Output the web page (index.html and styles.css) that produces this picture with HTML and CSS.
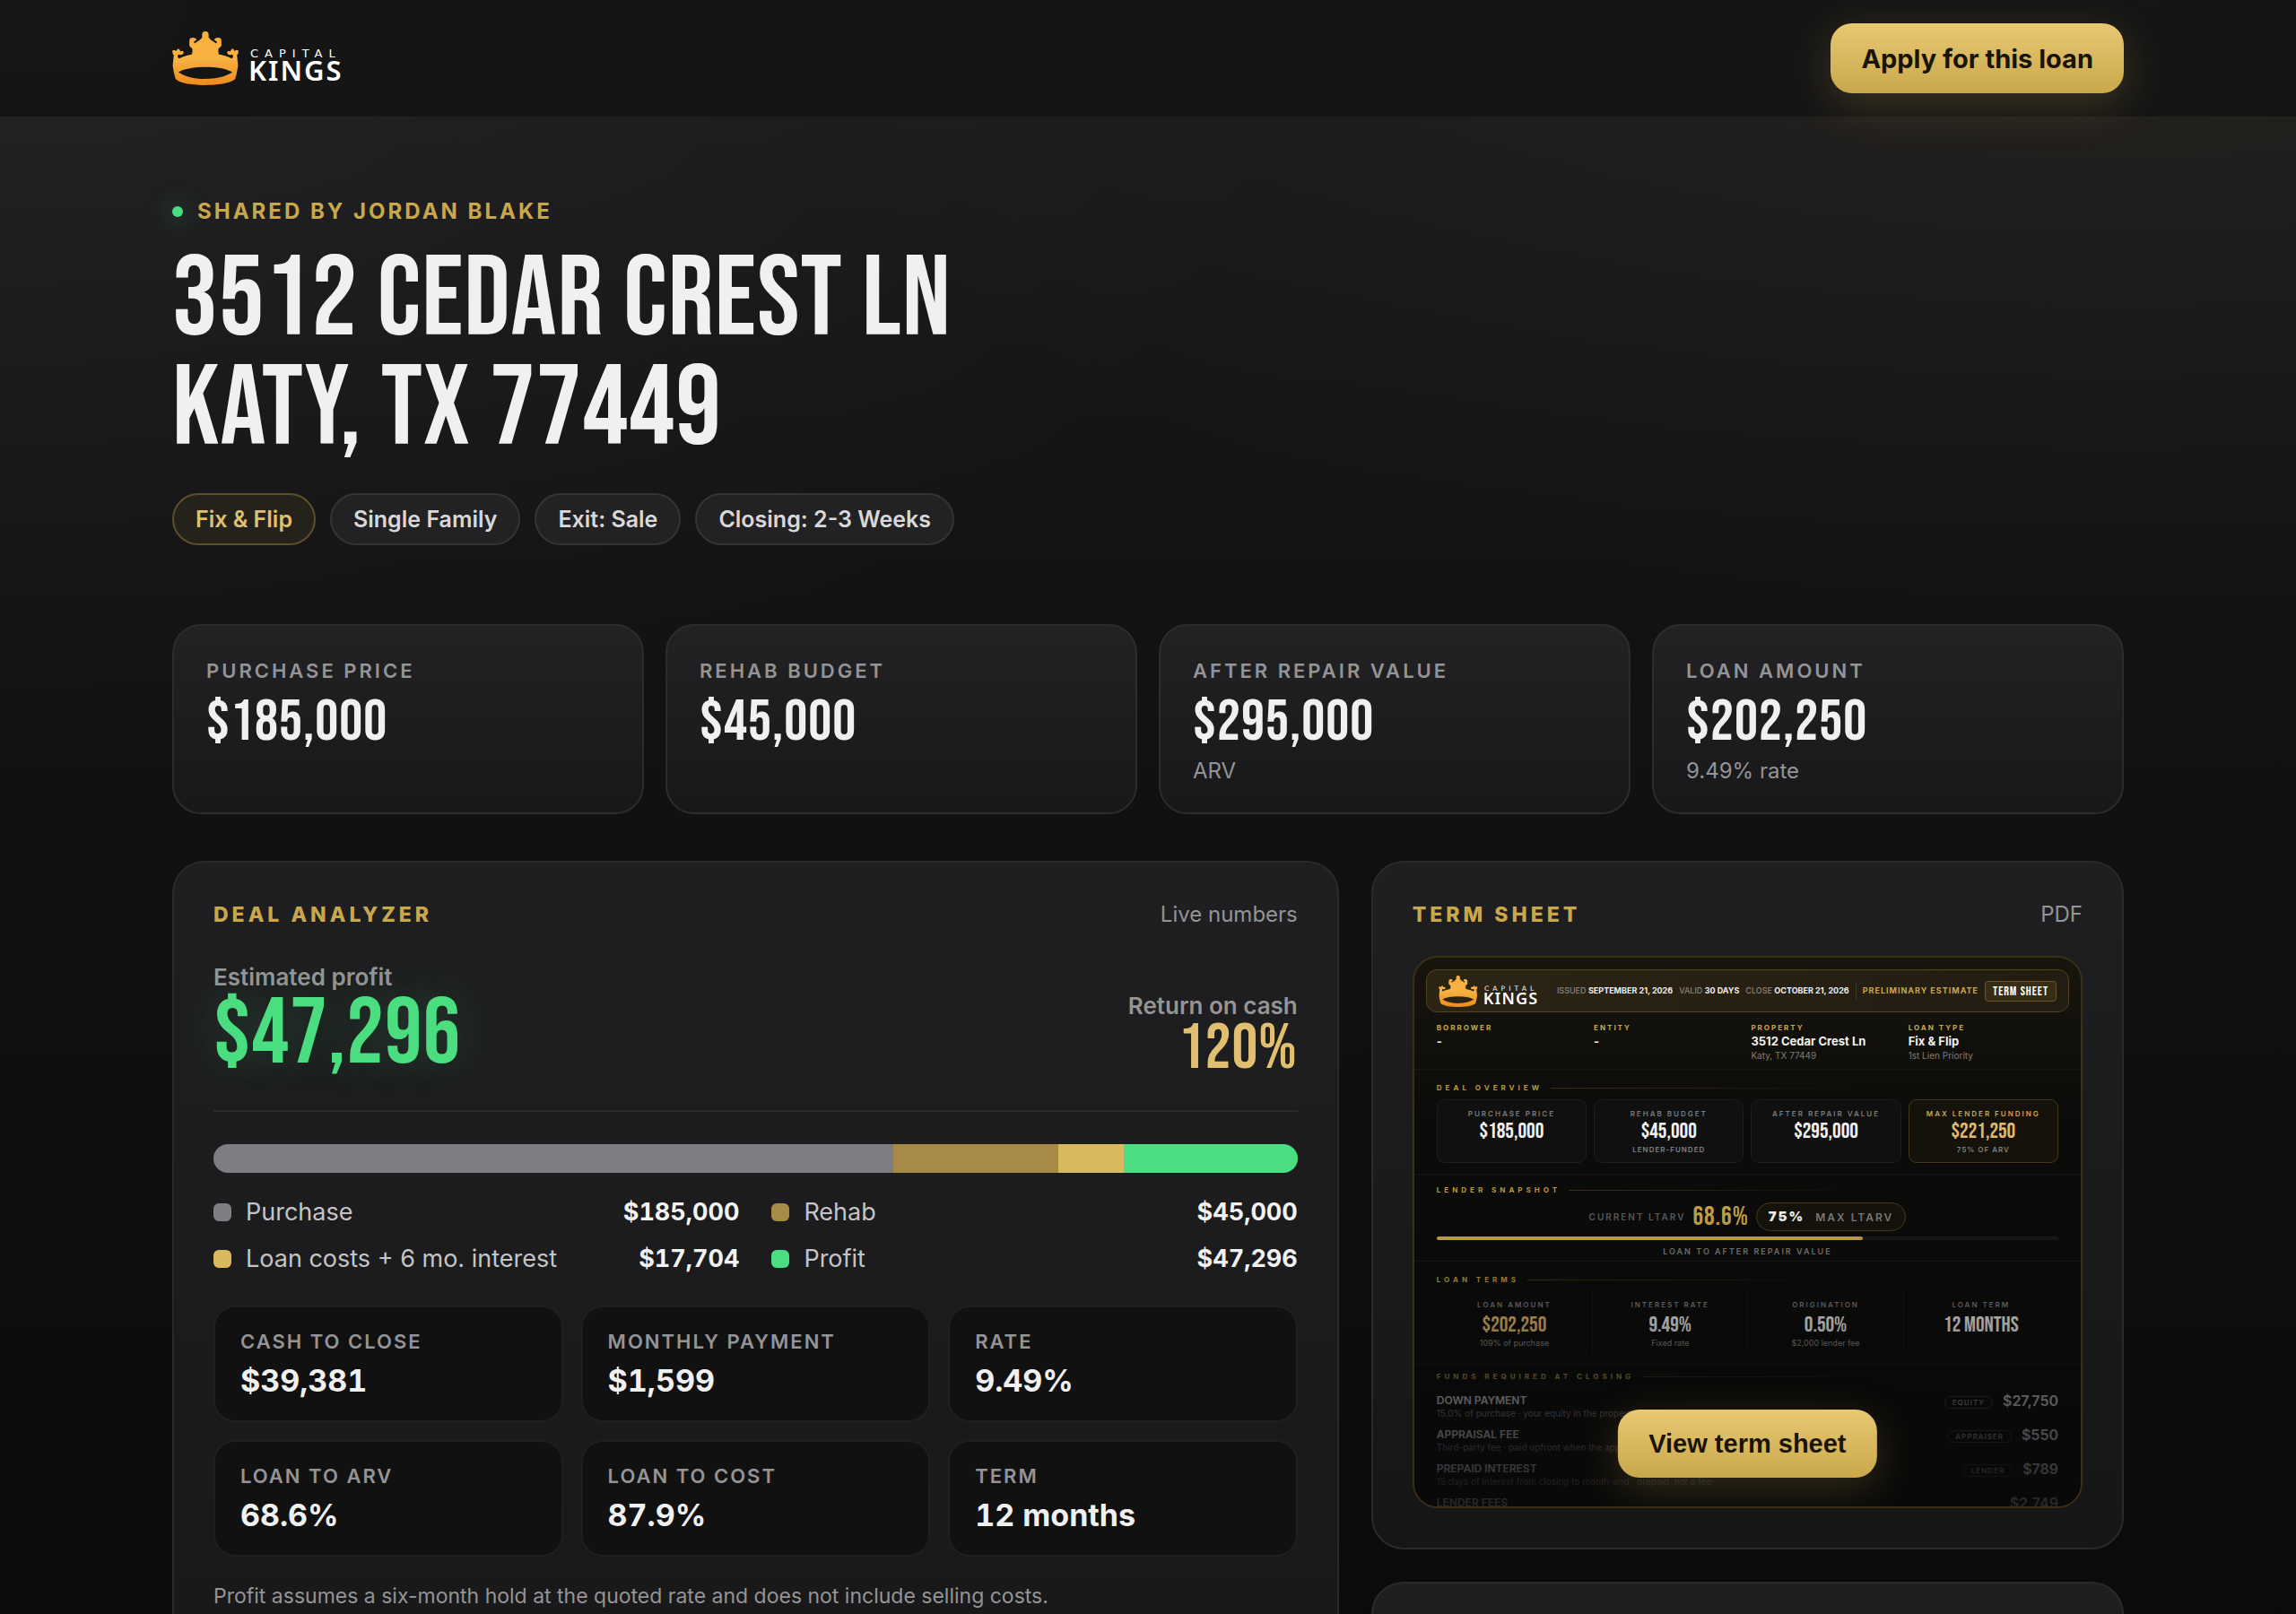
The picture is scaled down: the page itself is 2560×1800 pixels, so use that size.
FILE: index.html
```html
<!DOCTYPE html>
<html lang="en">
<head>
    <meta charset="utf-8">
    <title>3512 Cedar Crest Ln - Capital Kings</title>
    <link rel="stylesheet" href="styles.css">
</head>
<body>
    <svg class="sprite" aria-hidden="true">
        <defs>
            <linearGradient id="crownGold" x1="0" y1="0" x2="0" y2="60" gradientUnits="userSpaceOnUse">
                <stop offset="0" stop-color="#fbb03b"/>
                <stop offset="0.5" stop-color="#f7b243"/>
                <stop offset="1" stop-color="#ee8a1c"/>
            </linearGradient>
            <path id="crownHalf" d="M36.5 0 H37 C39.5 0 40.7 1.5 40.6 3.5 V6.6 C42 9.5 46 11.2 49 13.4 C50 12.2 50.2 10.8 48.4 10.4 L46.8 9.2 C48.5 6.6 52 6.4 54.2 8 C55.3 10 54.6 13 54.9 15.5 C54.6 17.5 52.4 18 51.5 19.5 C51.4 21.5 51.2 24 52.3 25.8 C57 26.6 62 28 66.3 30.2 C68.4 29 68.4 26.4 66.4 25.8 C64.4 27 61.6 26 61.3 23.8 C61.2 22 63 20.8 64.8 22.6 L66 20 L68 19.2 L69.4 22 L71.4 20.8 L74 21.6 L73.2 25.6 L72.2 26.2 L73.4 38 C72.6 44 71.6 49 70.2 53 C66 58 50 60 36.5 60 V53 C52 53 62 49 67 45.4 C60 41.6 50 39.8 36.5 39.8 Z"/>
            <symbol id="logo" viewBox="0 0 188 60">
                <g fill="url(#crownGold)">
                    <use href="#crownHalf"/>
                    <use href="#crownHalf" transform="translate(74 0) scale(-1 1)"/>
                </g>
                <text class="logo-top" x="87" y="29">CAPITAL</text>
                <text class="logo-main" x="85" y="55">KINGS</text>
            </symbol>
        </defs>
    </svg>

    <header class="topbar">
        <div class="wrap topbar-row">
            <svg class="logo" role="img" aria-label="Capital Kings"><use href="#logo"/></svg>
            <button type="button" class="btn">Apply for this loan</button>
        </div>
    </header>

    <main class="wrap">
        <section class="hero">
            <p class="eyebrow"><span class="dot"></span>Shared by Jordan Blake</p>
            <h1>3512 Cedar Crest Ln<br>Katy, TX 77449</h1>
            <ul class="chips">
                <li class="chip chip-gold">Fix &amp; Flip</li>
                <li class="chip">Single Family</li>
                <li class="chip">Exit: Sale</li>
                <li class="chip">Closing: 2-3 Weeks</li>
            </ul>
        </section>

        <section class="stats">
            <div class="stat">
                <p class="label">Purchase price</p>
                <p class="stat-value">$185,000</p>
            </div>
            <div class="stat">
                <p class="label">Rehab budget</p>
                <p class="stat-value">$45,000</p>
            </div>
            <div class="stat">
                <p class="label">After repair value</p>
                <p class="stat-value">$295,000</p>
                <p class="stat-sub">ARV</p>
            </div>
            <div class="stat">
                <p class="label">Loan amount</p>
                <p class="stat-value">$202,250</p>
                <p class="stat-sub">9.49% rate</p>
            </div>
        </section>

        <div class="columns">
            <section class="panel">
                <div class="panel-head">
                    <h2>Deal analyzer</h2>
                    <span>Live numbers</span>
                </div>

                <div class="profit-row">
                    <div>
                        <p class="profit-label">Estimated profit</p>
                        <p class="profit-value">$47,296</p>
                    </div>
                    <div class="return">
                        <p class="profit-label">Return on cash</p>
                        <p class="return-value">120%</p>
                    </div>
                </div>

                <div class="bar">
                    <span class="c-purchase" style="width: 62.71%"></span>
                    <span class="c-rehab" style="width: 15.25%"></span>
                    <span class="c-costs" style="width: 6%"></span>
                    <span class="c-profit" style="width: 16.04%"></span>
                </div>

                <ul class="legend">
                    <li><i class="swatch c-purchase"></i>Purchase<b>$185,000</b></li>
                    <li><i class="swatch c-rehab"></i>Rehab<b>$45,000</b></li>
                    <li><i class="swatch c-costs"></i>Loan costs + 6 mo. interest<b>$17,704</b></li>
                    <li><i class="swatch c-profit"></i>Profit<b>$47,296</b></li>
                </ul>

                <div class="minis">
                    <div class="mini"><p class="label">Cash to close</p><p class="mini-value">$39,381</p></div>
                    <div class="mini"><p class="label">Monthly payment</p><p class="mini-value">$1,599</p></div>
                    <div class="mini"><p class="label">Rate</p><p class="mini-value">9.49%</p></div>
                    <div class="mini"><p class="label">Loan to ARV</p><p class="mini-value">68.6%</p></div>
                    <div class="mini"><p class="label">Loan to cost</p><p class="mini-value">87.9%</p></div>
                    <div class="mini"><p class="label">Term</p><p class="mini-value">12 months</p></div>
                </div>

                <p class="note">Profit assumes a six-month hold at the quoted rate and does not include selling costs.</p>
            </section>

            <aside class="side">
                <section class="panel">
                    <div class="panel-head">
                        <h2>Term sheet</h2>
                        <span>PDF</span>
                    </div>

                    <div class="sheet">
                        <div class="sheet-top">
                            <svg class="sheet-logo" role="img" aria-label="Capital Kings"><use href="#logo"/></svg>
                            <div class="sheet-meta">
                                <span>Issued <b>September 21, 2026</b></span>
                                <span>Valid <b>30 days</b></span>
                                <span>Close <b>October 21, 2026</b></span>
                                <span class="sheet-prelim">Preliminary estimate</span>
                                <span class="sheet-badge">Term sheet</span>
                            </div>
                        </div>

                        <div class="sheet-block sheet-info">
                            <div><h4>Borrower</h4><p class="info-main">-</p></div>
                            <div><h4>Entity</h4><p class="info-main">-</p></div>
                            <div><h4>Property</h4><p class="info-main">3512 Cedar Crest Ln</p><p class="info-sub">Katy, TX 77449</p></div>
                            <div><h4>Loan type</h4><p class="info-main">Fix &amp; Flip</p><p class="info-sub">1st Lien Priority</p></div>
                        </div>

                        <div class="sheet-block">
                            <h3>Deal overview</h3>
                            <div class="boxes">
                                <div class="box"><p class="tiny">Purchase price</p><p class="box-value">$185,000</p></div>
                                <div class="box"><p class="tiny">Rehab budget</p><p class="box-value">$45,000</p><p class="box-sub">Lender-funded</p></div>
                                <div class="box"><p class="tiny">After repair value</p><p class="box-value">$295,000</p></div>
                                <div class="box box-gold"><p class="tiny">Max lender funding</p><p class="box-value">$221,250</p><p class="box-sub">75% of ARV</p></div>
                            </div>
                        </div>

                        <div class="sheet-block snapshot">
                            <h3>Lender snapshot</h3>
                            <div class="ltarv">
                                <span class="ltarv-label">Current LTARV</span>
                                <span class="ltarv-value">68.6%</span>
                                <span class="ltarv-pill"><b>75%</b>Max LTARV</span>
                            </div>
                            <div class="meter"><span style="width: 68.6%"></span></div>
                            <p class="tiny meter-note">Loan to after repair value</p>
                        </div>

                        <div class="sheet-block terms-block">
                            <h3>Loan terms</h3>
                            <div class="terms">
                                <div><p class="tiny">Loan amount</p><p class="box-value gold">$202,250</p><p class="term-sub">109% of purchase</p></div>
                                <div><p class="tiny">Interest rate</p><p class="box-value">9.49%</p><p class="term-sub">Fixed rate</p></div>
                                <div><p class="tiny">Origination</p><p class="box-value">0.50%</p><p class="term-sub">$2,000 lender fee</p></div>
                                <div><p class="tiny">Loan term</p><p class="box-value">12 months</p></div>
                            </div>
                        </div>

                        <div class="sheet-block funds-block">
                            <h3>Funds required at closing</h3>
                            <table class="funds">
                                <tr><th scope="row">Down payment<small>15.0% of purchase · your equity in the property</small></th><td><span class="tag">Equity</span>$27,750</td></tr>
                                <tr><th scope="row">Appraisal fee<small>Third-party fee · paid upfront when the appraisal is ordered</small></th><td><span class="tag">Appraiser</span>$550</td></tr>
                                <tr><th scope="row">Prepaid interest<small>15 days of interest from closing to month-end · prepaid, not a fee</small></th><td><span class="tag">Lender</span>$789</td></tr>
                                <tr><th scope="row">Lender fees</th><td>$2,749</td></tr>
                            </table>
                        </div>

                        <div class="sheet-fade"></div>
                        <button type="button" class="btn sheet-btn">View term sheet</button>
                    </div>
                </section>

                <section class="panel panel-next"></section>
            </aside>
        </div>
    </main>
</body>
</html>
```
FILE: styles.css
```css
* {
    box-sizing: border-box;
}
html {
    background: #0b0b0d;
}
body {
    margin: 0;
    height: 100vh;
    overflow: hidden;
    font-family: Inter, "Liberation Sans", sans-serif;
    color: #f0f0f0;
    background:
        radial-gradient(ellipse 1500px 900px at 0 0, rgba(255,255,255,0.045), transparent),
        radial-gradient(ellipse 1500px 700px at 92% 0, rgba(201,168,76,0.06), transparent),
        linear-gradient(180deg, #1b1b1d 0, #121214 700px, #0b0b0d 1800px);
}
p, h1, h2, h3, h4, ul {
    margin: 0;
    padding: 0;
}
ul {
    list-style: none;
}
.sprite {
    position: absolute;
    width: 0;
    height: 0;
}
.wrap {
    width: 85%;
    margin: 0 auto;
}

/* header */
.topbar {
    background: rgba(17,17,19,0.75);
}
.topbar-row {
    display: flex;
    align-items: center;
    justify-content: space-between;
    height: 130px;
}
.logo {
    width: 188px;
    height: 60px;
}
.logo-top {
    font: 400 13px "DejaVu Sans", sans-serif;
    letter-spacing: 7px;
    fill: #fff;
}
.logo-main {
    font: 600 31px "Noto Sans", sans-serif;
    letter-spacing: 2px;
    fill: #fff;
}
.btn {
    padding: 0 34px;
    height: 78px;
    border: 0;
    border-radius: 24px;
    background: linear-gradient(180deg, #e8c872, #c9a84c);
    box-shadow: 0 12px 48px rgba(201,168,76,0.22);
    color: #1a1405;
    font: 700 29px Inter, "Liberation Sans", sans-serif;
    cursor: pointer;
}

/* hero */
.hero {
    padding-top: 90px;
}
.eyebrow {
    display: flex;
    align-items: center;
    gap: 16px;
    color: #c9a84c;
    font-size: 24px;
    line-height: 32px;
    font-weight: 700;
    letter-spacing: 3px;
    text-transform: uppercase;
}
.dot {
    width: 12px;
    height: 12px;
    border-radius: 50%;
    background: #4ade80;
    box-shadow: 0 0 24px rgba(74,222,128,0.5);
}
h1, .stat-value, .profit-value, .return-value, .box-value, .ltarv-value, .sheet-badge {
    font-family: "Bebas Neue", "Liberation Sans Narrow", sans-serif;
    font-weight: 400;
    letter-spacing: 1px;
    text-transform: uppercase;
}
h1 {
    margin-top: 22px;
    font-size: 127px;
    line-height: 122px;
}
.chips {
    display: flex;
    gap: 16px;
    margin-top: 32px;
}
.chip {
    padding: 0 24px;
    border: 2px solid #343436;
    border-radius: 30px;
    background: #222224;
    color: #d8d8da;
    font-size: 25px;
    line-height: 54px;
    font-weight: 600;
}
.chip-gold {
    border-color: #5e4f29;
    background: #25221b;
    color: #e0c070;
}

/* stat cards */
.stats {
    display: grid;
    grid-template-columns: repeat(4, 1fr);
    gap: 24px;
    margin-top: 88px;
}
.stat {
    padding: 36px 36px 30px;
    border: 2px solid #2c2c2e;
    border-radius: 32px;
    background: linear-gradient(180deg, #222224, #18181a);
}
.label {
    color: #949496;
    font-size: 22px;
    line-height: 28px;
    font-weight: 600;
    letter-spacing: 2px;
    text-transform: uppercase;
}
.stat .label {
    letter-spacing: 3px;
}
.stat-value {
    margin-top: 14px;
    font-size: 65px;
    line-height: 60px;
}
.stat-sub {
    margin-top: 8px;
    color: #949496;
    font-size: 24px;
    line-height: 32px;
}

/* panels */
.columns {
    display: grid;
    grid-template-columns: 1.55fr 1fr;
    gap: 36px;
    margin-top: 52px;
}
.side {
    display: flex;
    flex-direction: column;
    gap: 36px;
}
.panel {
    padding: 42px 44px 44px;
    border: 2px solid #2a2a2c;
    border-radius: 36px;
    background: linear-gradient(180deg, #1f1f21, #161617);
}
.panel-next {
    min-height: 400px;
}
.panel-head {
    display: flex;
    justify-content: space-between;
    margin-bottom: 30px;
    color: #949496;
    font-size: 24px;
    line-height: 32px;
}
.panel-head h2 {
    color: #c9a84c;
    font-size: 23px;
    font-weight: 800;
    letter-spacing: 4px;
    text-transform: uppercase;
}
.profit-row {
    display: flex;
    justify-content: space-between;
    align-items: flex-end;
    padding: 8px 0 36px;
    border-bottom: 2px solid #2a2a2c;
}
.profit-label {
    color: #949496;
    font-size: 26px;
    line-height: 32px;
    font-weight: 600;
}
.profit-value {
    color: #4ade80;
    font-size: 104px;
    line-height: 96px;
    text-shadow: 0 0 48px rgba(74,222,128,0.2);
}
.return {
    text-align: right;
}
.return-value {
    color: #e0c070;
    font-size: 72px;
    line-height: 64px;
}
.bar {
    display: flex;
    height: 32px;
    margin-top: 36px;
    border-radius: 16px;
    overflow: hidden;
}
.c-purchase { background: #7d7d84; }
.c-rehab { background: #a68a45; }
.c-costs { background: #d9b95f; }
.c-profit { background: #4ade80; }
.legend {
    display: grid;
    grid-template-columns: 1fr 1fr;
    gap: 16px 36px;
    margin-top: 26px;
}
.legend li {
    display: flex;
    align-items: center;
    gap: 16px;
    color: #c4c4c6;
    font-size: 27px;
    line-height: 36px;
}
.legend b {
    margin-left: auto;
    color: #f2f2f2;
    font-weight: 700;
    font-variant-numeric: tabular-nums;
}
.swatch {
    width: 20px;
    height: 20px;
    border-radius: 6px;
}
.minis {
    display: grid;
    grid-template-columns: repeat(3, 1fr);
    gap: 20px;
    margin-top: 34px;
}
.mini {
    padding: 24px 28px 22px;
    border: 2px solid #1f1f20;
    border-radius: 24px;
    background: #111112;
}
.mini-value {
    margin-top: 8px;
    font-size: 34px;
    line-height: 44px;
    font-weight: 700;
    font-variant-numeric: tabular-nums;
}
.note {
    margin-top: 26px;
    color: #949496;
    font-size: 23px;
    line-height: 36px;
}

/* term sheet preview */
.sheet {
    position: relative;
    aspect-ratio: 40 / 33;
    padding: 13px;
    border: 2px solid #3b3017;
    border-radius: 28px;
    overflow: hidden;
    background: linear-gradient(180deg, #18150c, #0b0b0a 180px, #090909);
}
.sheet-top {
    display: flex;
    align-items: center;
    justify-content: space-between;
    height: 48px;
    padding: 0 13px;
    border: 1px solid #51431f;
    border-radius: 12px;
    background: linear-gradient(90deg, #2c2413, #221c12);
}
.sheet-logo {
    width: 110px;
    height: 35px;
}
.sheet-meta {
    display: flex;
    align-items: center;
    gap: 7px;
    color: #8a8578;
    font-size: 9px;
    line-height: 20px;
    font-weight: 500;
    text-transform: uppercase;
}
.sheet-meta b {
    color: #eee;
    font-weight: 700;
}
.sheet-prelim {
    padding-left: 7px;
    border-left: 1px solid #3d3620;
    color: #c9a84c;
    font-weight: 700;
    letter-spacing: 1px;
}
.sheet-badge {
    padding: 0 8px;
    border: 1px solid #6b5826;
    border-radius: 4px;
    background: #372c14;
    color: #fff;
    font-size: 14px;
    line-height: 21px;
}
.sheet-block {
    margin: 0 -13px;
    padding: 13px 25px 12px;
    border-bottom: 1px solid #161616;
}
.sheet-info {
    display: grid;
    grid-template-columns: repeat(4, 1fr);
    gap: 8px;
    padding: 11px 25px 8px;
}
.sheet h4 {
    color: #c9a84c;
    font-size: 8px;
    line-height: 12px;
    font-weight: 700;
    letter-spacing: 2px;
    text-transform: uppercase;
}
.info-main {
    font-size: 13px;
    line-height: 18px;
    font-weight: 700;
}
.info-sub {
    color: #7c7c7c;
    font-size: 10px;
    line-height: 14px;
}
.sheet h3 {
    display: flex;
    align-items: center;
    gap: 9px;
    color: #b8993f;
    font-size: 8px;
    line-height: 14px;
    font-weight: 700;
    letter-spacing: 4px;
    text-transform: uppercase;
}
.sheet h3::after {
    content: "";
    flex: 1;
    height: 1px;
    background: linear-gradient(90deg, #3a3015, transparent 60%);
}
.boxes {
    display: grid;
    grid-template-columns: repeat(4, 1fr);
    gap: 8px;
    margin-top: 6px;
}
.box {
    min-height: 71px;
    padding: 8px 0 7px;
    border: 1px solid #1d1d1d;
    border-radius: 9px;
    background: #101011;
    text-align: center;
}
.box-gold {
    border-color: #463a1a;
    background: #15120b;
}
.tiny {
    color: #7c7c7c;
    font-size: 8px;
    line-height: 14px;
    font-weight: 600;
    letter-spacing: 2px;
    text-transform: uppercase;
    text-align: center;
}
.box-gold .tiny {
    color: #c9a84c;
}
.box-value {
    font-size: 24px;
    line-height: 26px;
    letter-spacing: 0;
}
.box-gold .box-value, .gold {
    color: #e0b86a;
}
.box-sub {
    color: #808080;
    font-size: 8px;
    line-height: 14px;
    font-weight: 600;
    letter-spacing: 1px;
    text-transform: uppercase;
}
.snapshot {
    padding: 10px 25px 3px;
}
.ltarv {
    display: flex;
    align-items: center;
    justify-content: center;
    gap: 8px;
    margin-top: 7px;
}
.ltarv-label {
    color: #5a5a5a;
    font-size: 10px;
    font-weight: 600;
    letter-spacing: 2px;
    text-transform: uppercase;
}
.ltarv-value {
    color: #c4a145;
    font-size: 29px;
    line-height: 31px;
}
.ltarv-pill {
    padding: 0 13px;
    border: 1px solid #463a1a;
    border-radius: 16px;
    background: #14120b;
    color: #7a7a7a;
    font-size: 12px;
    line-height: 29px;
    font-weight: 600;
    letter-spacing: 2px;
    text-transform: uppercase;
}
.ltarv-pill b {
    margin-right: 12px;
    color: #f2f2f2;
    font-size: 15px;
}
.meter {
    height: 4px;
    margin-top: 6px;
    border-radius: 2px;
    background: #181818;
}
.meter span {
    display: block;
    height: 4px;
    border-radius: 2px;
    background: #c9a84c;
}
.meter-note {
    margin-top: 6px;
    font-size: 9px;
}
.terms {
    display: grid;
    grid-template-columns: repeat(4, 1fr);
    margin-top: 3px;
    text-align: center;
}
.terms > div {
    min-height: 72px;
    padding-top: 11px;
}
.terms > div + div {
    border-left: 1px solid #151515;
}
.terms .box-value {
    margin-top: 3px;
}
.term-sub {
    color: #8c8c8c;
    font-size: 9px;
    line-height: 14px;
}
.funds-block {
    padding-top: 6px;
    border-bottom: 0;
}
.funds {
    width: 100%;
    margin-top: 12px;
    border-collapse: collapse;
}
.funds th, .funds td {
    height: 38px;
    padding: 0;
    vertical-align: top;
}
.funds th {
    font-size: 12px;
    line-height: 16px;
    font-weight: 600;
    text-align: left;
    text-transform: uppercase;
}
.funds small {
    display: block;
    color: #8a8a8a;
    font-size: 10px;
    line-height: 12px;
    font-weight: 400;
    text-transform: none;
}
.funds td {
    font-size: 16px;
    line-height: 16px;
    font-weight: 600;
    text-align: right;
}
.tag {
    display: inline-block;
    margin-right: 11px;
    padding: 0 8px;
    border: 1px solid #3c3c3c;
    border-radius: 8px;
    color: #9a9a9a;
    font-size: 8px;
    line-height: 12px;
    letter-spacing: 1px;
    text-transform: uppercase;
    vertical-align: middle;
}
.sheet-fade {
    position: absolute;
    inset: 45% 0 0;
    background: linear-gradient(180deg, transparent, rgba(9,9,9,0.35) 40%, rgba(9,9,9,0.65) 65%, rgba(9,9,9,0.88));
}
.sheet-btn {
    position: absolute;
    left: 50%;
    bottom: 32px;
    height: 76px;
    transform: translateX(-50%);
    font-family: "Liberation Sans", Arial, sans-serif;
    white-space: nowrap;
}
```
